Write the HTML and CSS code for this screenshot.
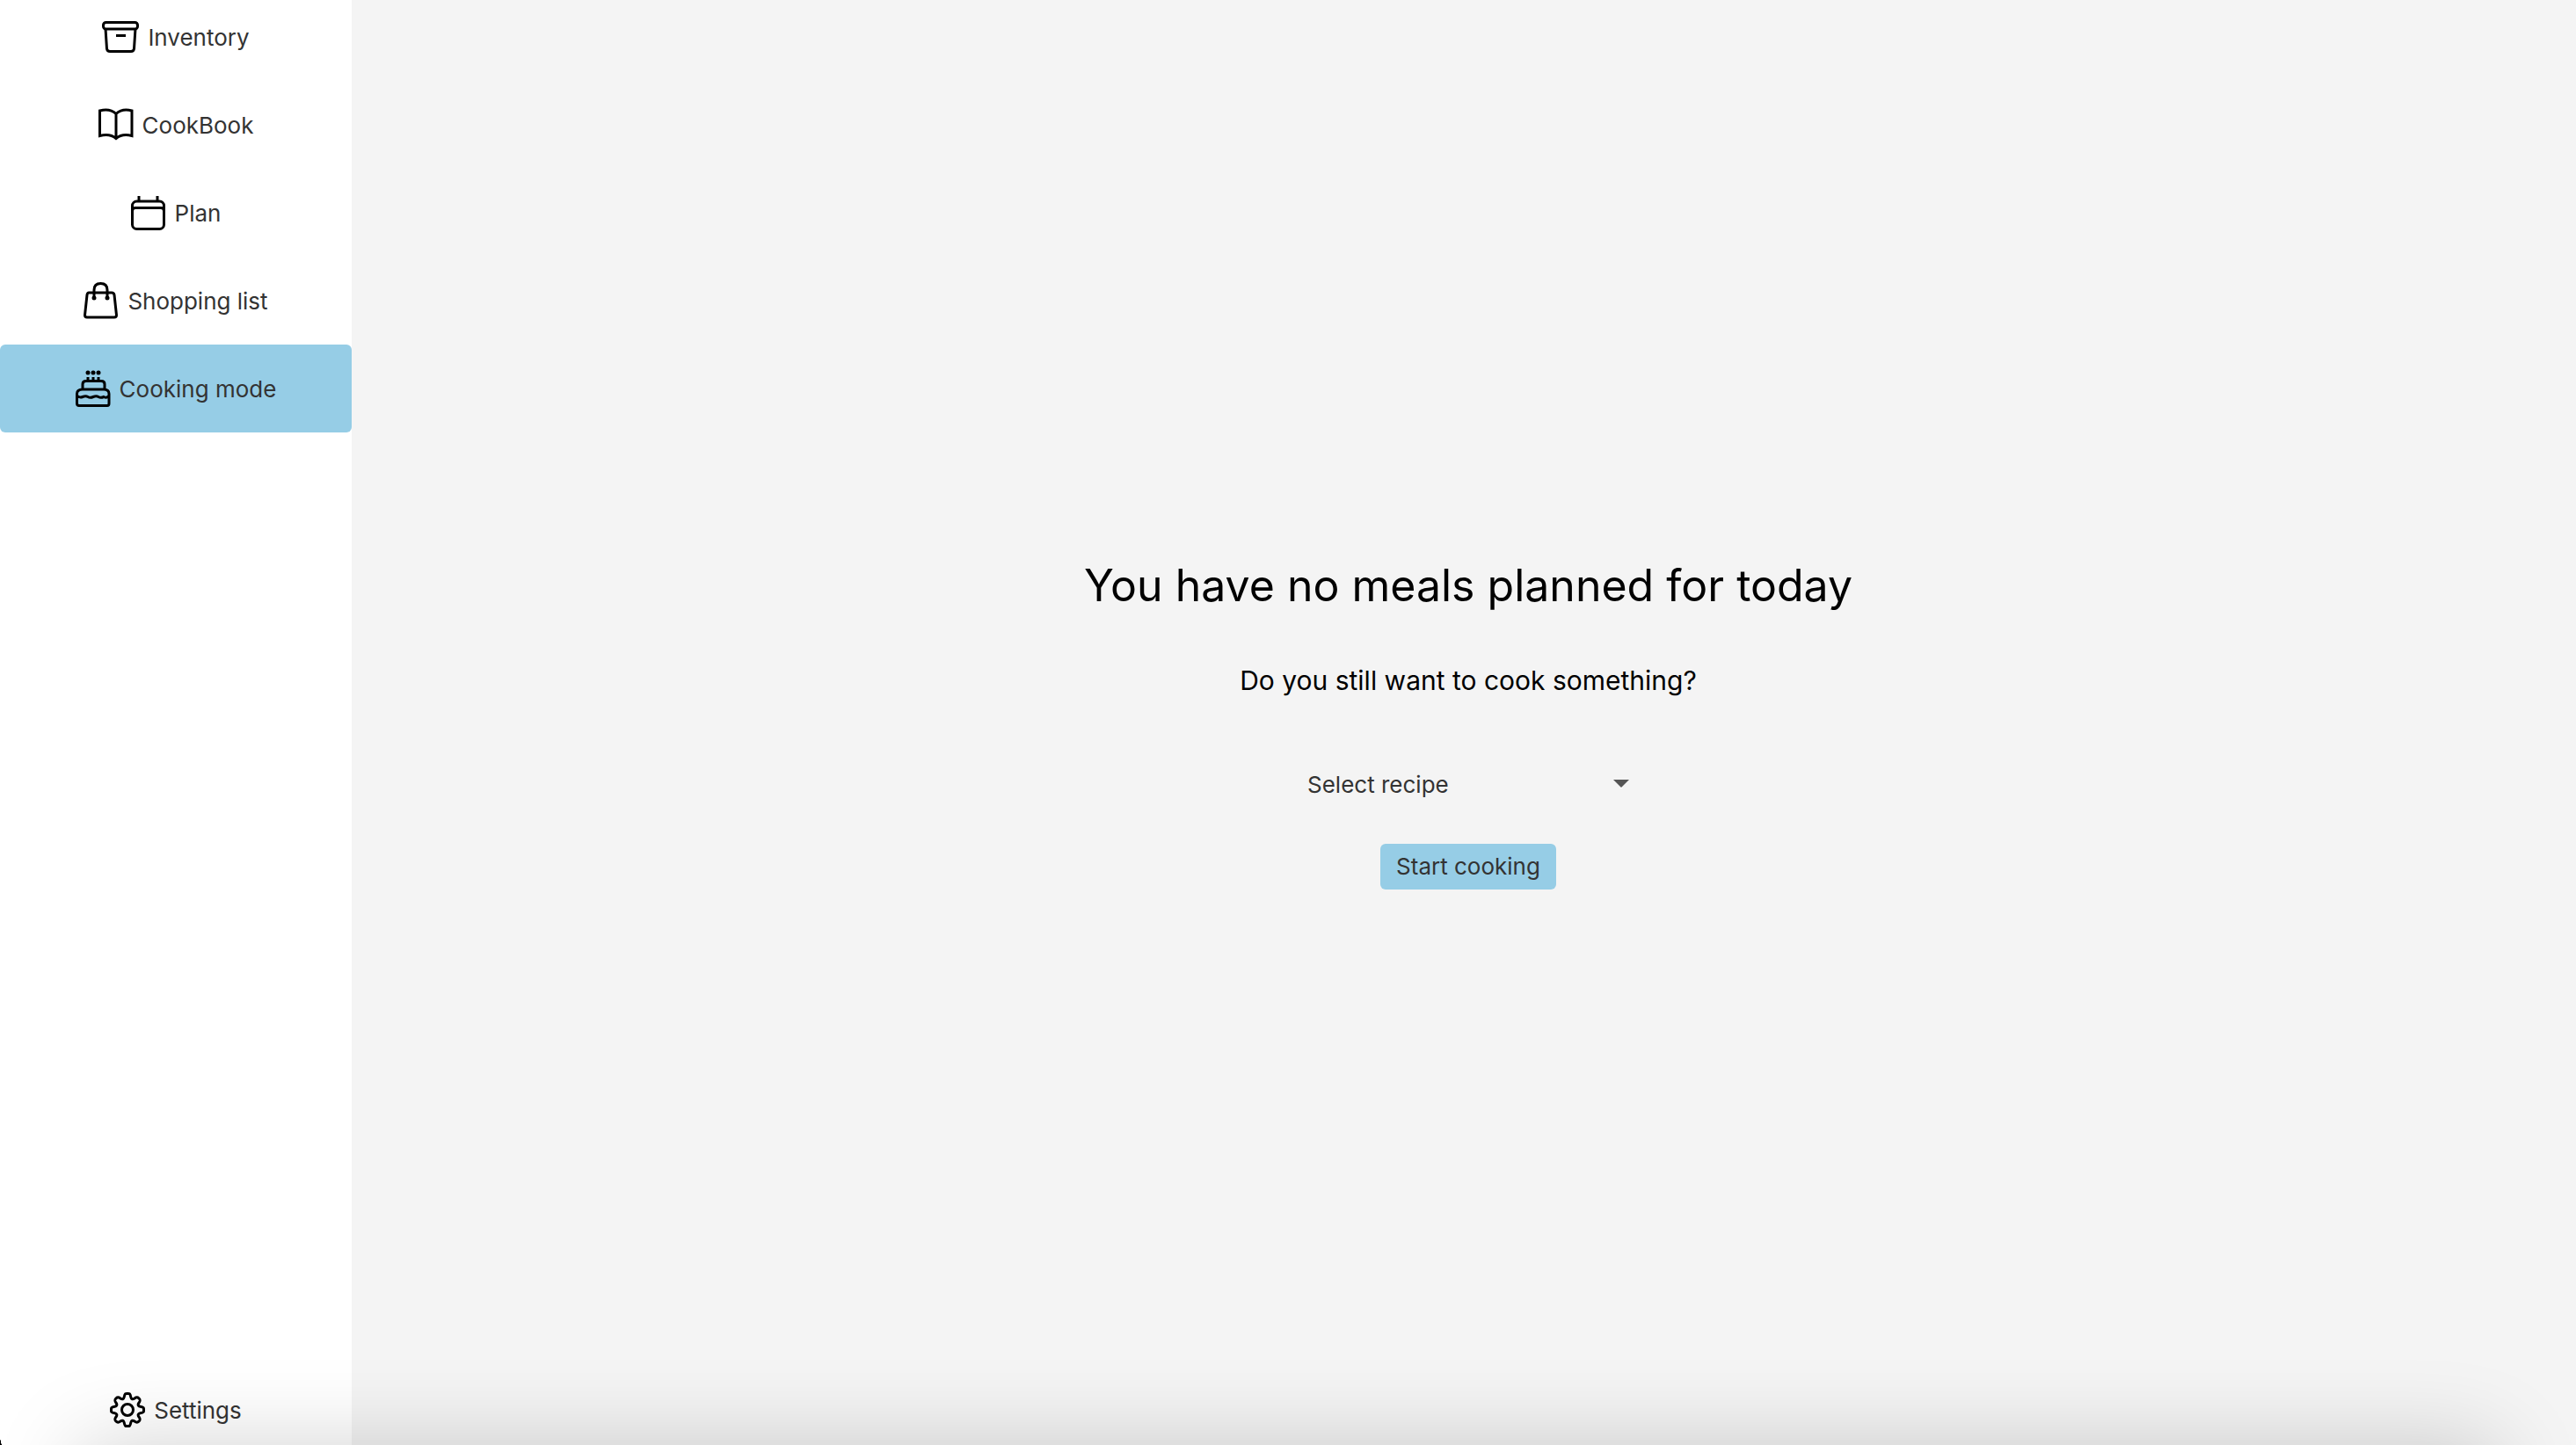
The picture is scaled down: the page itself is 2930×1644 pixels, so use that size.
FILE: index.html
```html
<!DOCTYPE html>
<html lang="en">
<head>
<meta charset="utf-8">
<title>Cooking mode</title>
<link rel="stylesheet" href="styles.css">
</head>
<body>
<div class="app">
  <nav class="sidebar">
    <div class="nav-main">
      <a class="nav-item" href="#inventory">
        <svg class="icon icon-wide" viewBox="0 0 42 44"><path d="M4 12.500L5.500 35.500Q6 38.500 9 38.500H33Q36 38.500 36.500 35.500L38 12.500M16 20.500H27"/><rect x="1.500" y="5.500" width="39" height="7.500" rx="3"/></svg>
        <span>Inventory</span>
      </a>
      <a class="nav-item" href="#cookbook">
        <svg class="icon" viewBox="0 0 40 44"><path d="M20 9.500V37.500M1.500 6V34.500Q13 31.500 20 37.500Q27 31.500 38 34.500V6Q27 3 20 9.500Q13 3 1.500 6Z"/></svg>
        <span>CookBook</span>
      </a>
      <a class="nav-item" href="#plan">
        <svg class="icon" viewBox="0 0 40 44"><rect x="1.500" y="9" width="36" height="31.500" rx="5"/><path d="M1.500 20Q1.500 16.500 5 16.500H34Q37.500 16.500 37.500 20M9 3V8M30 3V8"/></svg>
        <span>Plan</span>
      </a>
      <a class="nav-item" href="#shopping">
        <svg class="icon" viewBox="0 0 40 44"><path d="M6 13H32Q34.500 13 35 15.500L37.500 38.500Q37.500 41 35 41H4Q1.500 41 1.500 38.500L4 15.500Q4.500 13 6 13ZM12 19V10Q12 2.500 19.500 2.500Q27 2.500 27 10V19"/><g class="solid"><circle cx="12" cy="19" r="2.500"/><circle cx="27" cy="19" r="2.500"/></g></svg>
        <span>Shopping list</span>
      </a>
      <a class="nav-item active" href="#cooking" aria-current="page">
        <svg class="icon" viewBox="0 0 40 44"><path d="M8 23V17Q8 13.500 12 13.500H29Q33 13.500 33 17V23M14 9V13M20 9V13M26 9V13M1.500 28V39Q1.500 41.500 4 41.500H36Q38 41.500 38 39V28Q38 23 32 23H8Q1.500 23 1.500 28ZM1.500 30Q4.500 33 8 31.500T14 31.500T20 31.500T26 31.500T32 31.500Q36 33.500 38 30"/><g class="solid"><circle cx="14" cy="4" r="2.500"/><circle cx="20" cy="4" r="2.500"/><circle cx="26" cy="4" r="2.500"/></g></svg>
        <span>Cooking mode</span>
      </a>
    </div>
    <a class="nav-item nav-settings" href="#settings">
      <svg class="icon" viewBox="0 0 40 44"><circle cx="20" cy="22" r="6.500"/><path d="M16.200 7.500C17 3 18 3.500 20 3.500S23 3 23.800 7.500C24.300 10 26 10.500 28 9C31 6.800 31.600 7.600 33 9S35.200 11 33 14C31.500 16 32 17.700 34.500 18.200C39 19 38.500 20 38.500 22S39 25 34.500 25.800C32 26.300 31.500 28 33 30C35.200 33 34.400 33.600 33 35S31 37.200 28 35C26 33.500 24.300 34 23.800 36.500C23 41 22 40.500 20 40.500S17 41 16.200 36.500C15.700 34 14 33.500 12 35C9 37.200 8.400 36.400 7 35S4.800 33 7 30C8.500 28 8 26.300 5.500 25.800C1 25 1.500 24 1.500 22S1 19 5.500 18.200C8 17.700 8.500 16 7 14C4.800 11 5.600 10.400 7 9S9 6.800 12 9C14 10.500 15.700 10 16.200 7.500Z"/></svg>
      <span>Settings</span>
    </a>
  </nav>
  <main class="content">
    <h1 class="title">You have no meals planned for today</h1>
    <p class="subtitle">Do you still want to cook something?</p>
    <div class="picker">
      <select class="picker-select" aria-label="Recipe">
        <option>Select recipe</option>
      </select>
      <svg class="picker-arrow" viewBox="0 0 18 10"><path class="arrow-edge" d="M7 10H11L9 8Z"/><path d="M0 0H18L9 9Z"/></svg>
    </div>
    <button class="start" type="button">Start cooking</button>
  </main>
</div>
<div class="edge-shadow"></div>
<div class="corner"></div>
</body>
</html>
```
FILE: styles.css
```css
* {
  box-sizing: border-box;
}

body {
  margin: 0;
  background: #f4f4f4;
  color: #000;
  font-family: Inter, "Liberation Sans", sans-serif;
  font-size: 26px;
}

.app {
  display: flex;
  min-height: 100vh;
  overflow: hidden;
}

.sidebar {
  display: flex;
  flex: 0 0 400px;
  flex-direction: column;
  justify-content: space-between;
  background: #fff;
}

.nav-main {
  margin-top: -8px;
}

.nav-item {
  display: flex;
  align-items: center;
  justify-content: center;
  gap: 10px;
  height: 100px;
  border-radius: 6px;
  color: #333;
  text-decoration: none;
}

.nav-item.active {
  background: #96cde6;
}

.nav-settings {
  height: 80px;
}

.icon {
  width: 40px;
  height: 44px;
  fill: none;
  stroke: #000;
  stroke-width: 3;
}

.icon-wide {
  width: 42px;
}

.icon .solid {
  fill: #000;
  stroke: none;
}

.content {
  display: flex;
  flex: 1;
  flex-direction: column;
  align-items: center;
  justify-content: center;
  padding-left: 10px;
}

.title {
  margin: 0 0 54px;
  font-size: 50px;
  font-weight: 400;
  line-height: 68px;
}

.subtitle {
  margin: 0 0 66px;
  font-size: 30px;
  line-height: 40px;
}

.picker {
  display: grid;
  align-items: center;
  width: 366px;
  margin-bottom: 36px;
}

.picker-select {
  grid-area: 1 / 1;
  width: 100%;
  height: 64px;
  padding: 0;
  border: 0;
  appearance: none;
  background: transparent;
  color: #333;
  font: inherit;
}

.picker-arrow {
  grid-area: 1 / 1;
  justify-self: end;
  width: 18px;
  height: 10px;
  fill: #555;
  pointer-events: none;
}

.picker-arrow .arrow-edge {
  fill: #fff;
}

.start {
  height: 52px;
  padding: 0 18px 2px;
  border: 0;
  border-radius: 6px;
  background: #96cde6;
  color: #333;
  font: inherit;
}

.edge-shadow {
  position: fixed;
  top: 100%;
  right: 90px;
  left: 90px;
  height: 140px;
  box-shadow: 0 0 100px rgba(0, 0, 0, 0.18);
  pointer-events: none;
}

.corner {
  position: fixed;
  bottom: 0;
  left: 0;
  width: 3px;
  height: 14px;
  background: radial-gradient(ellipse at 100% 0, transparent 70%, #000 75%);
}
```
